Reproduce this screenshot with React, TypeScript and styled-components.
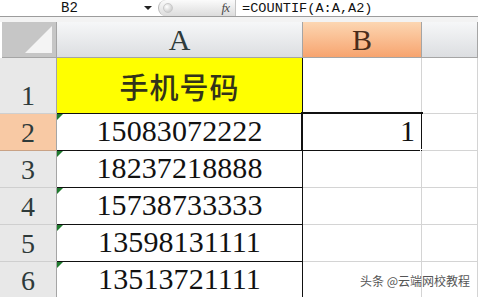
import React, { FC } from 'react';
import styled, { createGlobalStyle, css } from 'styled-components';

const GlobalStyle = createGlobalStyle`
  html, body {
    margin: 0;
    padding: 0;
    background: #ffffff;
    overflow: hidden;
  }
  body {
    font-family: "Liberation Serif", "Noto Sans CJK SC", serif;
  }
`;

const colors = {
  grid: '#d4d4d4',
  headerBorder: '#a5a5a5',
  cellBorder: '#111111',
  headerText: '#2e3a3a',
};

const Page = styled.div`
  position: relative;
  width: 478px;
  height: 297px;
  overflow: hidden;
  background: #ffffff;
`;

const FormulaBar = styled.div`
  display: flex;
  align-items: stretch;
  height: 16px;
  border-bottom: 1px solid #9c9c9c;
  background: #ffffff;
`;

const NameBox = styled.div`
  width: 158px;
  display: flex;
  align-items: center;
  justify-content: space-between;
  padding: 0 6px 0 61px;
  box-sizing: border-box;
  font-family: "Liberation Mono", monospace;
  font-size: 14px;
  color: #111;
`;

const DropArrow = styled.span`
  width: 0;
  height: 0;
  border-left: 4px solid transparent;
  border-right: 4px solid transparent;
  border-top: 4px solid #222;
`;

const FxPanel = styled.div`
  position: relative;
  width: 78px;
  display: flex;
  align-items: center;
  justify-content: flex-end;
  padding-right: 6px;
  box-sizing: border-box;
  background: linear-gradient(#fbfbfb, #dcdcdc);
  border-radius: 9px 0 0 9px;
  border-left: 1px solid #b8b8b8;
  border-right: 1px solid #c4c4c4;
`;

const Knob = styled.span`
  position: absolute;
  left: 4px;
  top: 3px;
  width: 8px;
  height: 8px;
  border-radius: 50%;
  background: radial-gradient(circle at 35% 35%, #ffffff, #bdbdbd);
  border: 1px solid #c9c9c9;
`;

const FxLabel = styled.span`
  font-family: "Liberation Serif", serif;
  font-style: italic;
  font-size: 13px;
  color: #4a4a4a;
  letter-spacing: -1px;
`;

const FormulaText = styled.div`
  display: flex;
  align-items: center;
  padding-left: 6px;
  font-family: "Liberation Mono", monospace;
  font-size: 13.6px;
  color: #111;
`;

const Spacer = styled.div`
  height: 5px;
  background: #f3f3f3;
`;

const Sheet = styled.div`
  display: grid;
  grid-template-columns: 57px 246px 119px 1fr;
  grid-template-rows: 36px 56px repeat(5, 37px);
`;

const headerGradient = css`
  background: linear-gradient(#f6f7f8, #dcdee1);
`;

const Corner = styled.div`
  position: relative;
  margin-left: 2px;
  background: #c6c6c6;
  border-right: 1px solid ${colors.headerBorder};
  border-bottom: 1px solid ${colors.headerBorder};
  overflow: hidden;
`;

const CornerTriangle = styled.span`
  position: absolute;
  right: 4px;
  bottom: 4px;
  width: 0;
  height: 0;
  border-left: 27px solid transparent;
  border-bottom: 27px solid #f4f4f4;
`;

const ColHeader = styled.div<{ $active?: boolean }>`
  display: flex;
  align-items: flex-end;
  justify-content: center;
  padding-bottom: 2px;
  box-sizing: border-box;
  font-size: 30px;
  line-height: 30px;
  color: ${colors.headerText};
  border-right: 1px solid ${colors.headerBorder};
  border-bottom: 1px solid ${colors.headerBorder};
  ${p =>
    p.$active
      ? css`
          background: linear-gradient(#fcd6b2, #f7a46f);
          color: #4a2c1a;
        `
      : headerGradient}
`;

const RowHeader = styled.div<{ $active?: boolean }>`
  display: flex;
  align-items: flex-end;
  justify-content: center;
  padding-bottom: 3px;
  box-sizing: border-box;
  font-size: 28px;
  line-height: 28px;
  color: ${colors.headerText};
  background: ${p => (p.$active ? '#f8c9a4' : '#e8e8e8')};
  border-right: 1px solid ${colors.headerBorder};
  border-bottom: 1px solid ${p => (p.$active ? '#c9a285' : '#cfcfcf')};
`;

const Cell = styled.div<{ $align?: 'center' | 'right'; $fill?: string; $boxed?: boolean }>`
  position: relative;
  display: flex;
  align-items: flex-end;
  justify-content: ${p => (p.$align === 'right' ? 'flex-end' : 'center')};
  padding: 0 6px 4px;
  box-sizing: border-box;
  font-size: 30px;
  line-height: 30px;
  letter-spacing: 0.1px;
  color: #111;
  background: ${p => p.$fill || '#ffffff'};
  border-right: 1px solid ${p => (p.$boxed ? colors.cellBorder : colors.grid)};
  border-bottom: 1px solid ${p => (p.$boxed ? colors.cellBorder : colors.grid)};
`;

const TitleText = styled.span`
  font-family: "Noto Sans CJK SC", sans-serif;
  font-weight: 500;
  font-size: 29px;
  line-height: 29px;
  color: #33331a;
  letter-spacing: 1px;
  margin-bottom: 8px;
`;

const TextMarker = styled.span`
  position: absolute;
  left: 0;
  top: 0;
  width: 0;
  height: 0;
  border-top: 6px solid #1f7a2e;
  border-right: 6px solid transparent;
`;

const Selection = styled.span`
  position: absolute;
  left: -2px;
  top: -2px;
  right: -2px;
  bottom: -2px;
  border: 2px solid #111;
  pointer-events: none;
`;

const FillHandle = styled.span`
  position: absolute;
  right: -6px;
  bottom: -6px;
  width: 5px;
  height: 5px;
  background: #111;
  border: 1px solid #fff;
`;

const Watermark = styled.div`
  position: absolute;
  right: 8px;
  bottom: 8px;
  font-family: "Noto Sans CJK SC", sans-serif;
  font-size: 12px;
  color: #555555;
  text-shadow: 0 0 2px #ffffff;
`;

const phones = ['15083072222', '18237218888', '15738733333', '13598131111', '13513721111'];

const App: FC = () => {
  return (
    <Page>
      <GlobalStyle />
      <FormulaBar>
        <NameBox>
          <span>B2</span>
          <DropArrow />
        </NameBox>
        <FxPanel>
          <Knob />
          <FxLabel>fx</FxLabel>
        </FxPanel>
        <FormulaText>=COUNTIF(A:A,A2)</FormulaText>
      </FormulaBar>
      <Spacer />
      <Sheet>
        <Corner>
          <CornerTriangle />
        </Corner>
        <ColHeader>A</ColHeader>
        <ColHeader $active>B</ColHeader>
        <ColHeader />

        <RowHeader>1</RowHeader>
        <Cell $fill="#ffff00" $boxed>
          <TitleText>手机号码</TitleText>
        </Cell>
        <Cell />
        <Cell />

        {phones.map((phone, i) => (
          <React.Fragment key={phone}>
            <RowHeader $active={i === 0}>{i + 2}</RowHeader>
            <Cell $boxed>
              <TextMarker />
              {phone}
            </Cell>
            <Cell $align="right">
              {i === 0 && (
                <>
                  1
                  <Selection>
                    <FillHandle />
                  </Selection>
                </>
              )}
            </Cell>
            <Cell />
          </React.Fragment>
        ))}
      </Sheet>
      <Watermark>头条 @云端网校教程</Watermark>
    </Page>
  );
};

export default App;
